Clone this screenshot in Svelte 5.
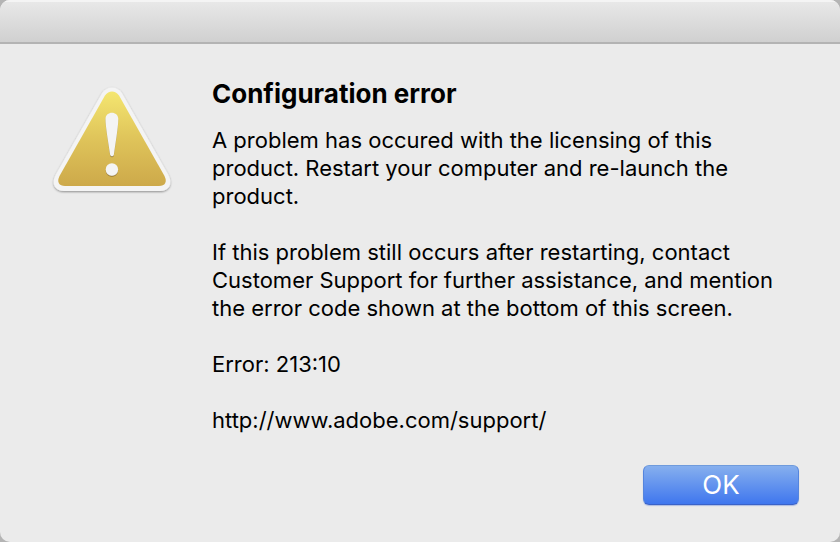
<script lang="ts">
	let open = $state(true);

	const title = 'Configuration error';
	const code = '213:10';
	const supportUrl = 'http://www.adobe.com/support/';

	const paragraphs = [
		'A problem has occured with the licensing of this product. Restart your computer and re-launch the product.',
		'If this problem still occurs after restarting, contact Customer Support for further assistance, and mention the error code shown at the bottom of this screen.',
		`Error: ${code}`,
	];
</script>

{#if open}
	<div class="window" role="alertdialog" aria-labelledby="alert-title" aria-describedby="alert-text">
		<header class="titlebar"></header>

		<main class="content">
			<svg class="icon" viewBox="0 0 128 116" aria-hidden="true">
				<defs>
					<linearGradient id="gold" x1="0" y1="0" x2="0" y2="1">
						<stop offset="0" stop-color="#f4e670" />
						<stop offset="0.5" stop-color="#dfc45a" />
						<stop offset="1" stop-color="#cda94a" />
					</linearGradient>
					<filter id="drop" x="-10%" y="-10%" width="120%" height="120%">
						<feDropShadow dx="0" dy="1" stdDeviation="1" flood-color="#000" flood-opacity="0.4" />
					</filter>
					<filter id="mark-drop" x="-30%" y="-10%" width="160%" height="120%">
						<feDropShadow dx="0" dy="1" stdDeviation="0.5" flood-color="#6b5010" flood-opacity="0.6" />
					</filter>
				</defs>
				<path
					d="M54 9 Q58 3.500 64 3.500 Q70 3.500 74 9 L120.500 91 C125 100 121 107 112 107 H16 C7 107 3 100 7.500 91 Z"
					fill="#f4f4f4"
					filter="url(#drop)"
				/>
				<path
					d="M57 11.500 Q60 7.500 64 7.500 Q68 7.500 71 11.500 L116.500 92 C119.500 98 117 102 111 102 H17 C11 102 8.500 98 11.500 92 Z"
					fill="url(#gold)"
				/>
				<g fill="#f4f4f4" filter="url(#mark-drop)">
					<path d="M57.500 35 C57.500 26.500 70.300 26.500 70.300 35 C70.300 43 67 62 65.800 71 Q64 73.500 62.200 71 C61 62 57.500 43 57.500 35 Z" />
					<circle cx="63.900" cy="85.500" r="6.200" />
				</g>
			</svg>

			<div class="message">
				<h1 id="alert-title">{title}</h1>
				<div id="alert-text" class="text">
					{#each paragraphs as text}
						<p>{text}</p>
					{/each}
					<p><a href={supportUrl}>{supportUrl}</a></p>
				</div>
			</div>
		</main>

		<footer class="actions">
			<button type="button" onclick={() => (open = false)}>OK</button>
		</footer>
	</div>
{/if}

<style>
	:global(body) {
		margin: 0;
		background: #b4b4b4;
	}

	.window {
		display: flex;
		flex-direction: column;
		box-sizing: border-box;
		min-height: 100vh;
		border-radius: 10px;
		overflow: hidden;
		background: #ebebeb;
		color: #000;
		font-family: Inter, 'Liberation Sans', sans-serif;
	}

	.titlebar {
		box-sizing: border-box;
		height: 44px;
		border-bottom: 2px solid #b3b3b3;
		background: linear-gradient(#e9e9e9, #d0d0d0);
		box-shadow: inset 0 2px 0 #f4f4f4;
	}

	/* ── Icon and message ── */
	.content {
		display: flex;
		flex: 1;
		gap: 36px;
		padding: 34px 40px 0 48px;
	}
	.icon {
		flex: none;
		width: 128px;
		height: 116px;
		margin-top: 6px;
	}
	.message {
		flex: 1;
		min-width: 0;
	}
	h1 {
		margin: 0 0 16px;
		font-size: 26px;
		font-weight: 700;
		line-height: 32px;
	}
	.text {
		display: flex;
		flex-direction: column;
		gap: 28px;
		font-size: 22px;
		line-height: 28px;
	}
	.text p {
		margin: 0;
	}
	.text a {
		color: inherit;
		text-decoration: none;
	}

	/* ── Buttons ── */
	.actions {
		display: flex;
		justify-content: flex-end;
		padding: 30px 41px 37px;
	}
	button {
		box-sizing: border-box;
		width: 156px;
		height: 40px;
		padding: 0;
		border: 1px solid;
		border-color: #6f9bdc #5585dd #3a62c8;
		border-radius: 6px;
		background: linear-gradient(#86afee, #3f76ee);
		box-shadow: 0 1px 1px rgba(60, 100, 210, 0.35);
		color: #fff;
		font-family: Inter, 'Liberation Sans', sans-serif;
		font-size: 26px;
		line-height: 32px;
	}
</style>
